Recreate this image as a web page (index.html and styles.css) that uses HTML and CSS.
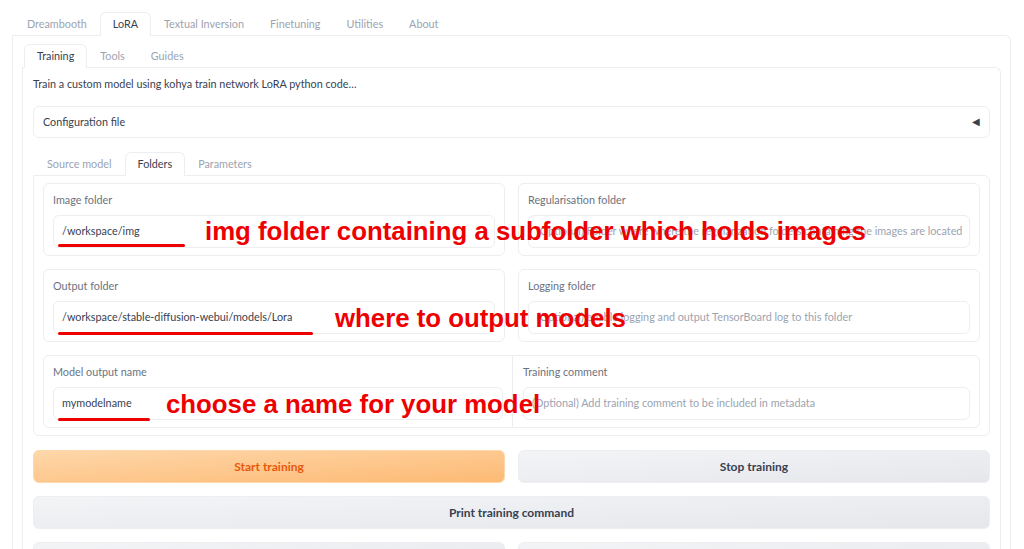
FILE: index.html
```html
<!DOCTYPE html>
<html>
<head>
<meta charset="utf-8">
<link rel="stylesheet" href="styles.css">
</head>
<body>
<div class="app">
  <div class="tabnav top">
    <div class="tab">Dreambooth</div>
    <div class="tab active">LoRA</div>
    <div class="tab">Textual Inversion</div>
    <div class="tab">Finetuning</div>
    <div class="tab">Utilities</div>
    <div class="tab">About</div>
  </div>
  <div class="panel outer">
    <div class="tabnav">
      <div class="tab active dark">Training</div>
      <div class="tab">Tools</div>
      <div class="tab">Guides</div>
    </div>
    <div class="panel inner">
      <p class="desc">Train a custom model using kohya train network LoRA python code…</p>
      <div class="accordion"><span>Configuration file</span><span class="arrow">◀</span></div>
      <div class="tabnav sub">
        <div class="tab">Source model</div>
        <div class="tab active dark">Folders</div>
        <div class="tab">Parameters</div>
      </div>
      <div class="panel folders">
        <div class="row">
          <div class="box">
            <div class="label">Image folder</div>
            <div class="input">/workspace/img</div>
          </div>
          <div class="box">
            <div class="label">Regularisation folder</div>
            <div class="input ph">(Optional) Folder where where the regularization folders containing the images are located</div>
          </div>
        </div>
        <div class="row">
          <div class="box">
            <div class="label">Output folder</div>
            <div class="input">/workspace/stable-diffusion-webui/models/Lora</div>
          </div>
          <div class="box">
            <div class="label">Logging folder</div>
            <div class="input ph">(Optional) enable logging and output TensorBoard log to this folder</div>
          </div>
        </div>
        <div class="box joined">
          <div class="half">
            <div class="label">Model output name</div>
            <div class="input">mymodelname</div>
          </div>
          <div class="half">
            <div class="label">Training comment</div>
            <div class="input ph">(Optional) Add training comment to be included in metadata</div>
          </div>
        </div>
      </div>
      <div class="btnrow first">
        <div class="btn primary">Start training</div>
        <div class="btn">Stop training</div>
      </div>
      <div class="btnrow">
        <div class="btn">Print training command</div>
      </div>
      <div class="btnrow">
        <div class="btn"></div>
        <div class="btn"></div>
      </div>
    </div>
  </div>
</div>
<div class="note n1">img folder containing a subfolder which holds images</div>
<div class="note n2">where to output models</div>
<div class="note n3">choose a name for your model</div>
<div class="uline u1"></div>
<div class="uline u2"></div>
<div class="uline u3"></div>
</body>
</html>
```
FILE: styles.css
```css
html, body { margin: 0; padding: 0; background: #fff; overflow: hidden; }
body { font-family: "Source Sans Pro", Lato, "Noto Sans", sans-serif; font-size: 10.8px; color: #374151; height: 549px; }
.app { padding: 12px 13px 0 12px; }
.tabnav { display: flex; height: 23px; padding-left: 2px; position: relative; z-index: 1; }
.tab { padding: 0 12px; line-height: 21px; color: #9ca3af; border: 1px solid transparent; border-bottom: none; border-radius: 6px 6px 0 0; box-sizing: border-box; height: 23px; }
.tab.active { color: #374151; border-color: #eceef1; background: #fff; margin-bottom: -1px; height: 24px; }
.panel { border: 1px solid #eceef1; border-radius: 0 6px 6px 6px; background: #fff; }
.outer { padding: 8px 9px 0 9px; border-bottom: none; height: 600px; }
.inner { padding: 0 10px 0 10px; border-bottom: none; height: 600px; }
.desc { margin: 0; height: 38px; line-height: 32px; color: #374151; }
.accordion { height: 32px; border: 1px solid #eceef1; border-radius: 6px; display: flex; align-items: center; justify-content: space-between; padding: 0 9px 0 9px; box-sizing: border-box; }
.accordion span:first-child { margin-top: -2px; }
.arrow { font-size: 10px; color: #374151; margin-top: -2px; }
.tabnav.sub { margin-top: 14px; padding-left: 1px; }
.folders { padding: 7px 9px 7px 9px; border-radius: 0 6px 6px 6px; }
.row { display: grid; grid-template-columns: minmax(0, 1fr) minmax(0, 1fr); gap: 13px; margin-bottom: 13px; }
.box { border: 1px solid #eceef1; border-radius: 6px; padding: 0 9px 8px 9px; height: 73px; box-sizing: border-box; min-width: 0; }
.label { height: 31px; line-height: 32px; color: #6b7280; }
.input { height: 33px; border: 1px solid #eceef1; border-radius: 6px; box-sizing: border-box; line-height: 30px; padding: 0 8px; white-space: nowrap; overflow: hidden; color: #374151; }
.input.ph { color: #9ca3af; }
.box.joined { display: grid; grid-template-columns: 468px minmax(0, 1fr); padding: 0; }
.half { padding: 0 9px 8px 9px; min-width: 0; }
.half + .half { border-left: 1px solid #eceef1; padding-left: 10px; }
.btnrow { display: grid; grid-auto-flow: column; grid-auto-columns: minmax(0, 1fr); gap: 13px; margin-top: 13px; }
.btnrow.first { margin-top: 14px; }
.btn { height: 33px; border-radius: 6px; background: linear-gradient(to bottom right, #f3f4f6, #e5e7eb); color: #374151; font-weight: 700; text-align: center; line-height: 31px; font-size: 12px; border: 1px solid #eceef1; box-sizing: border-box; }
.btn.primary { background: linear-gradient(to bottom right, #fed7aa, #fdba74); color: #ea580c; border-color: #fed7aa; }
.note { position: absolute; color: #e00; font-family: "Liberation Sans", Arial, sans-serif; font-weight: 700; font-size: 25.8px; line-height: 30px; white-space: nowrap; }
.n1 { left: 205px; top: 216px; }
.n2 { left: 335px; top: 303px; }
.n3 { left: 166px; top: 389px; }
.uline { position: absolute; height: 3px; background: #e00; border-radius: 2px; }
.u1 { left: 58px; top: 244px; width: 127px; }
.u2 { left: 58px; top: 332px; width: 255px; }
.u3 { left: 58px; top: 418px; width: 92px; }
```
